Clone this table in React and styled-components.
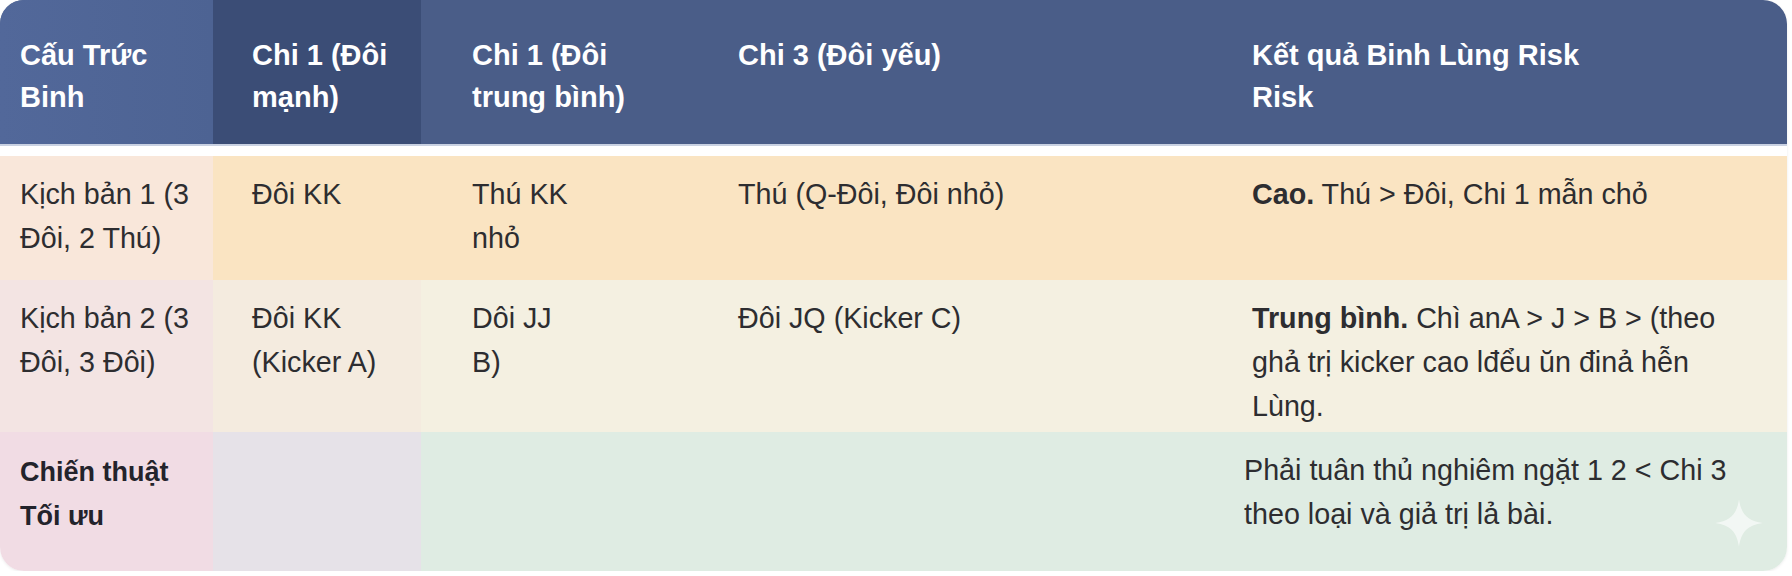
import React from "react";
import styled, { createGlobalStyle } from "styled-components";

const Global = createGlobalStyle`
  html, body { margin: 0; padding: 0; background: #ffffff; }
  body { font-family: "Liberation Sans", Arial, sans-serif; }
`;

const COLS = "213px 208px 279px 520px 1fr";

const Table = styled.div`
  position: relative;
  width: 1787px;
  border-radius: 24px;
  overflow: hidden;
  background: #ffffff;
  box-shadow: 0 1px 3px rgba(0, 0, 0, 0.08);
  display: flex;
  flex-direction: column;
`;

const HeaderRow = styled.div`
  display: grid;
  grid-template-columns: ${COLS};
  height: 146px;
  border-bottom: 2px solid #c9d1e2;
  box-sizing: border-box;
  background: #4a5d88;
`;

const HeadCell = styled.div`
  padding: 34px 0 0 ${(p) => p.$pad}px;
  background: ${(p) => p.$bg || "transparent"};
  color: #ffffff;
  font-weight: 700;
  font-size: 29px;
  line-height: 42px;
  white-space: nowrap;
`;

const Gap = styled.div`
  height: 10px;
  background: #ffffff;
`;

const Row = styled.div`
  display: grid;
  grid-template-columns: ${COLS};
  height: ${(p) => p.$h}px;
`;

const Cell = styled.div`
  padding: ${(p) => (p.$bold ? 18 : 16)}px 0 0 ${(p) => p.$pad}px;
  background: ${(p) => p.$bg};
  color: ${(p) => (p.$bold ? "#23232b" : "#2d2d30")};
  font-size: ${(p) => (p.$bold ? 27 : 28.7)}px;
  line-height: 44px;
  white-space: nowrap;
  font-weight: ${(p) => (p.$bold ? 700 : 400)};
`;

const B = styled.b`
  font-weight: 700;
`;

const Sparkle = styled.svg`
  position: absolute;
  right: 22px;
  bottom: 22px;
  width: 52px;
  height: 52px;
`;

const PAD = [20, 39, 51, 38, 32];

export default function App() {
  return (
    <>
      <Global />
      <Table>
        <HeaderRow>
          <HeadCell $pad={PAD[0]} $bg="linear-gradient(90deg, #52689a 0%, #4d6393 100%)">
            Cấu Trức
            <br />
            Binh
          </HeadCell>
          <HeadCell $pad={PAD[1]} $bg="#3b4d76">
            Chi 1 (Đôi
            <br />
            mạnh)
          </HeadCell>
          <HeadCell $pad={PAD[2]}>
            Chi 1 (Đôi
            <br />
            trung bình)
          </HeadCell>
          <HeadCell $pad={PAD[3]}>Chi 3 (Đôi yếu)</HeadCell>
          <HeadCell $pad={PAD[4]}>
            Kết quả Binh Lùng Risk
            <br />
            Risk
          </HeadCell>
        </HeaderRow>
        <Gap />
        <Row $h={124}>
          <Cell $pad={PAD[0]} $bg="#f9e7da">
            Kịch bản 1 (3
            <br />
            Đôi, 2 Thú)
          </Cell>
          <Cell $pad={PAD[1]} $bg="#fae4c2">Đôi KK</Cell>
          <Cell $pad={PAD[2]} $bg="#fae4c2">
            Thú KK
            <br />
            nhỏ
          </Cell>
          <Cell $pad={PAD[3]} $bg="#fae4c2">Thú (Q-Đôi, Đôi nhỏ)</Cell>
          <Cell $pad={PAD[4]} $bg="#fae4c2">
            <B>Cao.</B> Thú &gt; Đôi, Chi 1 mẫn chỏ
          </Cell>
        </Row>
        <Row $h={152}>
          <Cell $pad={PAD[0]} $bg="#f3e4e3">
            Kịch bản 2 (3
            <br />
            Đôi, 3 Đôi)
          </Cell>
          <Cell $pad={PAD[1]} $bg="#f4ebdf">
            Đôi KK
            <br />
            (Kicker A)
          </Cell>
          <Cell $pad={PAD[2]} $bg="#f4f0e1">
            Dôi JJ
            <br />
            B)
          </Cell>
          <Cell $pad={PAD[3]} $bg="#f4f0e1">Đôi JQ (Kicker C)</Cell>
          <Cell $pad={PAD[4]} $bg="#f4f0e1">
            <B>Trung bình.</B> Chì anA &gt; J &gt; B &gt; (theo
            <br />
            ghả trị kicker cao lđểu ŭn đinả hễn
            <br />
            Lùng.
          </Cell>
        </Row>
        <Row $h={139}>
          <Cell $pad={PAD[0]} $bg="#f1dce4" $bold>
            Chiến thuật
            <br />
            Tối ưu
          </Cell>
          <Cell $pad={PAD[1]} $bg="#e6e2e8" />
          <Cell $pad={PAD[2]} $bg="#dfece3" />
          <Cell $pad={PAD[3]} $bg="#dfece3" />
          <Cell $pad={PAD[4] - 8} $bg="#dfece3">
            Phải tuân thủ nghiêm ngặt 1 2 &lt; Chi 3
            <br />
            theo loại và giả trị lả bài.
          </Cell>
        </Row>
        <Sparkle viewBox="0 0 48 48" aria-hidden="true">
          <path
            d="M24 2 C26 16 32 22 46 24 C32 26 26 32 24 46 C22 32 16 26 2 24 C16 22 22 16 24 2 Z"
            fill="#ffffff"
            opacity="0.6"
          />
        </Sparkle>
      </Table>
    </>
  );
}
